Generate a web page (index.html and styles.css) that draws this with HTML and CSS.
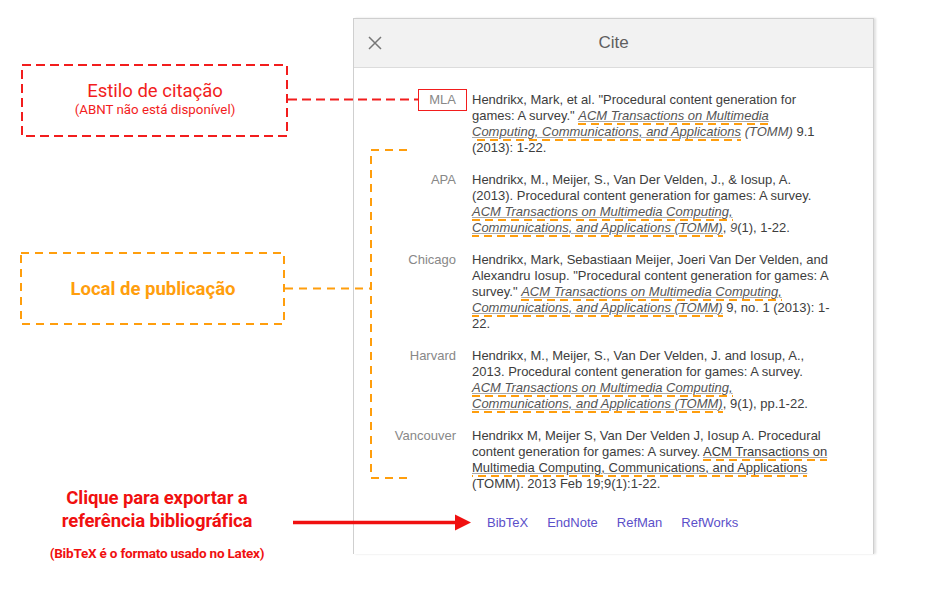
FILE: index.html
```html
<!DOCTYPE html>
<html lang="pt">
<head>
<meta charset="utf-8">
<title>Cite</title>
<link rel="stylesheet" href="styles.css">
</head>
<body>
<div class="stage">
  <section class="panel">
    <header class="panel-head">
      <span class="close" aria-label="Fechar">
        <svg width="14" height="14" viewBox="0 0 14 14"><path d="M1 1L13 13M13 1L1 13" stroke="#777" stroke-width="1.5" fill="none"/></svg>
      </span>
      <h1 class="title">Cite</h1>
    </header>
    <div class="panel-body">
      <div class="cite-row">
        <div class="label">MLA</div>
        <div class="text">Hendrikx, Mark, et al. "Procedural content generation for games: A survey." <span class="journal it">ACM Transactions on Multimedia Computing, Communications, and Applications</span> <i class="it">(TOMM)</i> 9.1 (2013): 1-22.</div>
      </div>
      <div class="cite-row">
        <div class="label">APA</div>
        <div class="text">Hendrikx, M., Meijer, S., Van Der Velden, J., &amp; Iosup, A. (2013). Procedural content generation for games: A survey. <span class="journal it">ACM Transactions on Multimedia Computing, Communications, and Applications (TOMM)</span>, <i class="it">9</i>(1), 1-22.</div>
      </div>
      <div class="cite-row">
        <div class="label">Chicago</div>
        <div class="text">Hendrikx, Mark, Sebastiaan Meijer, Joeri Van Der Velden, and Alexandru Iosup. "Procedural content generation for games: A survey." <span class="journal it">ACM Transactions on Multimedia Computing, Communications, and Applications (TOMM)</span> 9, no. 1 (2013): 1-22.</div>
      </div>
      <div class="cite-row">
        <div class="label">Harvard</div>
        <div class="text">Hendrikx, M., Meijer, S., Van Der Velden, J. and Iosup, A., 2013. Procedural content generation for games: A survey. <span class="journal it">ACM Transactions on Multimedia Computing, Communications, and Applications (TOMM)</span>, 9(1), pp.1-22.</div>
      </div>
      <div class="cite-row">
        <div class="label">Vancouver</div>
        <div class="text">Hendrikx M, Meijer S, Van Der Velden J, Iosup A. Procedural content generation for games: A survey. <span class="journal">ACM Transactions on Multimedia Computing, Communications, and Applications</span> (TOMM). 2013 Feb 19;9(1):1-22.</div>
      </div>
      <nav class="exports">
        <a href="#">BibTeX</a>
        <a href="#">EndNote</a>
        <a href="#">RefMan</a>
        <a href="#">RefWorks</a>
      </nav>
    </div>
  </section>

  <svg class="overlay" width="932" height="597" viewBox="0 0 932 597">
    <g fill="none" stroke="#f21d1d" stroke-width="2" stroke-dasharray="9 5">
      <rect x="22" y="65" width="265" height="71"/>
      <path d="M288 99.5H418"/>
    </g>
    <rect x="418.5" y="89.5" width="48" height="21" fill="none" stroke="#f21d1d" stroke-width="1"/>
    <g fill="none" stroke="#ff9e0d" stroke-width="2" stroke-dasharray="8 6">
      <rect x="21" y="253" width="263" height="71"/>
      <path d="M285 288.5H371"/>
      <path d="M407 150H371V478H407"/>
    </g>
    <path d="M293 522.5H456" stroke="#f01010" stroke-width="3.5"/>
    <path d="M455 514.5L471 522.5L455 530.5Z" fill="#f01010"/>
  </svg>

  <div class="note note-style">
    <div class="note-title">Estilo de citação</div>
    <div class="note-sub">(ABNT não está disponível)</div>
  </div>
  <div class="note note-venue">
    <div class="note-title strong">Local de publicação</div>
  </div>
  <div class="note note-export">
    <div class="export-title">Clique para exportar a<br>referência bibliográfica</div>
    <div class="export-sub">(BibTeX é o formato usado no Latex)</div>
  </div>
</div>
</body>
</html>
```

FILE: styles.css
```css
* { box-sizing: border-box; }
html, body { margin: 0; padding: 0; background: #fff; }
body { font-family: "Liberation Sans", Arial, sans-serif; }

.stage {
  position: relative;
  width: 932px;
  height: 597px;
  padding: 18px 0 0 353px;
  overflow: hidden;
}

.panel {
  width: 521px;
  height: 536px;
  border: 1px solid #cfcfcf;
  border-bottom: none;
  background: #fff;
  box-shadow: 2px 0 2px rgba(0,0,0,0.12);
  display: flex;
  flex-direction: column;
}

.panel-head {
  height: 49px;
  background: #f2f2f2;
  border-bottom: 1px solid #dcdcdc;
  display: flex;
  align-items: center;
  position: relative;
}
.close {
  display: flex;
  margin-left: 14px;
  width: 14px;
  height: 14px;
}
.title {
  margin: 0;
  flex: 1;
  text-align: center;
  font-size: 17px;
  font-weight: normal;
  color: #5f5f5f;
  margin-right: 28px;
}

.panel-body {
  padding: 24px 0 0 0;
  display: flex;
  flex-direction: column;
  gap: 16px;
}

.cite-row {
  display: grid;
  grid-template-columns: 102px 362px;
  column-gap: 16px;
  font-size: 13px;
  line-height: 16px;
}
.label {
  text-align: right;
  color: #888;
}
.text { color: #3d3d3d; }
.it { font-style: italic; color: #555; }
.journal {
  text-decoration: underline;
  text-decoration-color: #aaa;
  text-decoration-thickness: 1px;
  text-underline-offset: 1px;
  padding-bottom: 2px;
  background-image: repeating-linear-gradient(90deg, #ff9e0d 0 8px, transparent 8px 13px);
  background-size: 100% 2px;
  background-position: 0 100%;
  background-repeat: no-repeat;
}

.exports {
  display: flex;
  gap: 19px;
  padding-left: 133px;
  margin-top: 7px;
  font-size: 13px;
  line-height: 16px;
}
.exports a {
  color: #5b4fc9;
  text-decoration: none;
}

.overlay {
  position: absolute;
  left: 0;
  top: 0;
  pointer-events: none;
}

.note {
  position: absolute;
  display: flex;
  flex-direction: column;
  align-items: center;
  justify-content: center;
  font-family: Roboto, "Liberation Sans", sans-serif;
  text-align: center;
}
.note-style {
  left: 22px; top: 63px; width: 266px; height: 71px;
  color: #f21d1d;
}
.note-style .note-title { font-size: 18.5px; line-height: 21px; }
.note-style .note-sub { font-size: 13.3px; line-height: 15px; }
.note-venue {
  left: 21px; top: 253px; width: 264px; height: 72px;
  color: #ff9e0d;
}
.note-title.strong { font-weight: bold; font-size: 18.5px; line-height: 22px; }

.note-export {
  left: 27px; top: 487px; width: 260px;
  color: #f01010;
  font-weight: bold;
}
.export-title {
  font-size: 18.5px;
  line-height: 23px;
  letter-spacing: -0.1px;
}
.export-sub {
  margin-top: 12px;
  font-size: 13.5px;
  line-height: 16px;
  letter-spacing: -0.2px;
}
```
